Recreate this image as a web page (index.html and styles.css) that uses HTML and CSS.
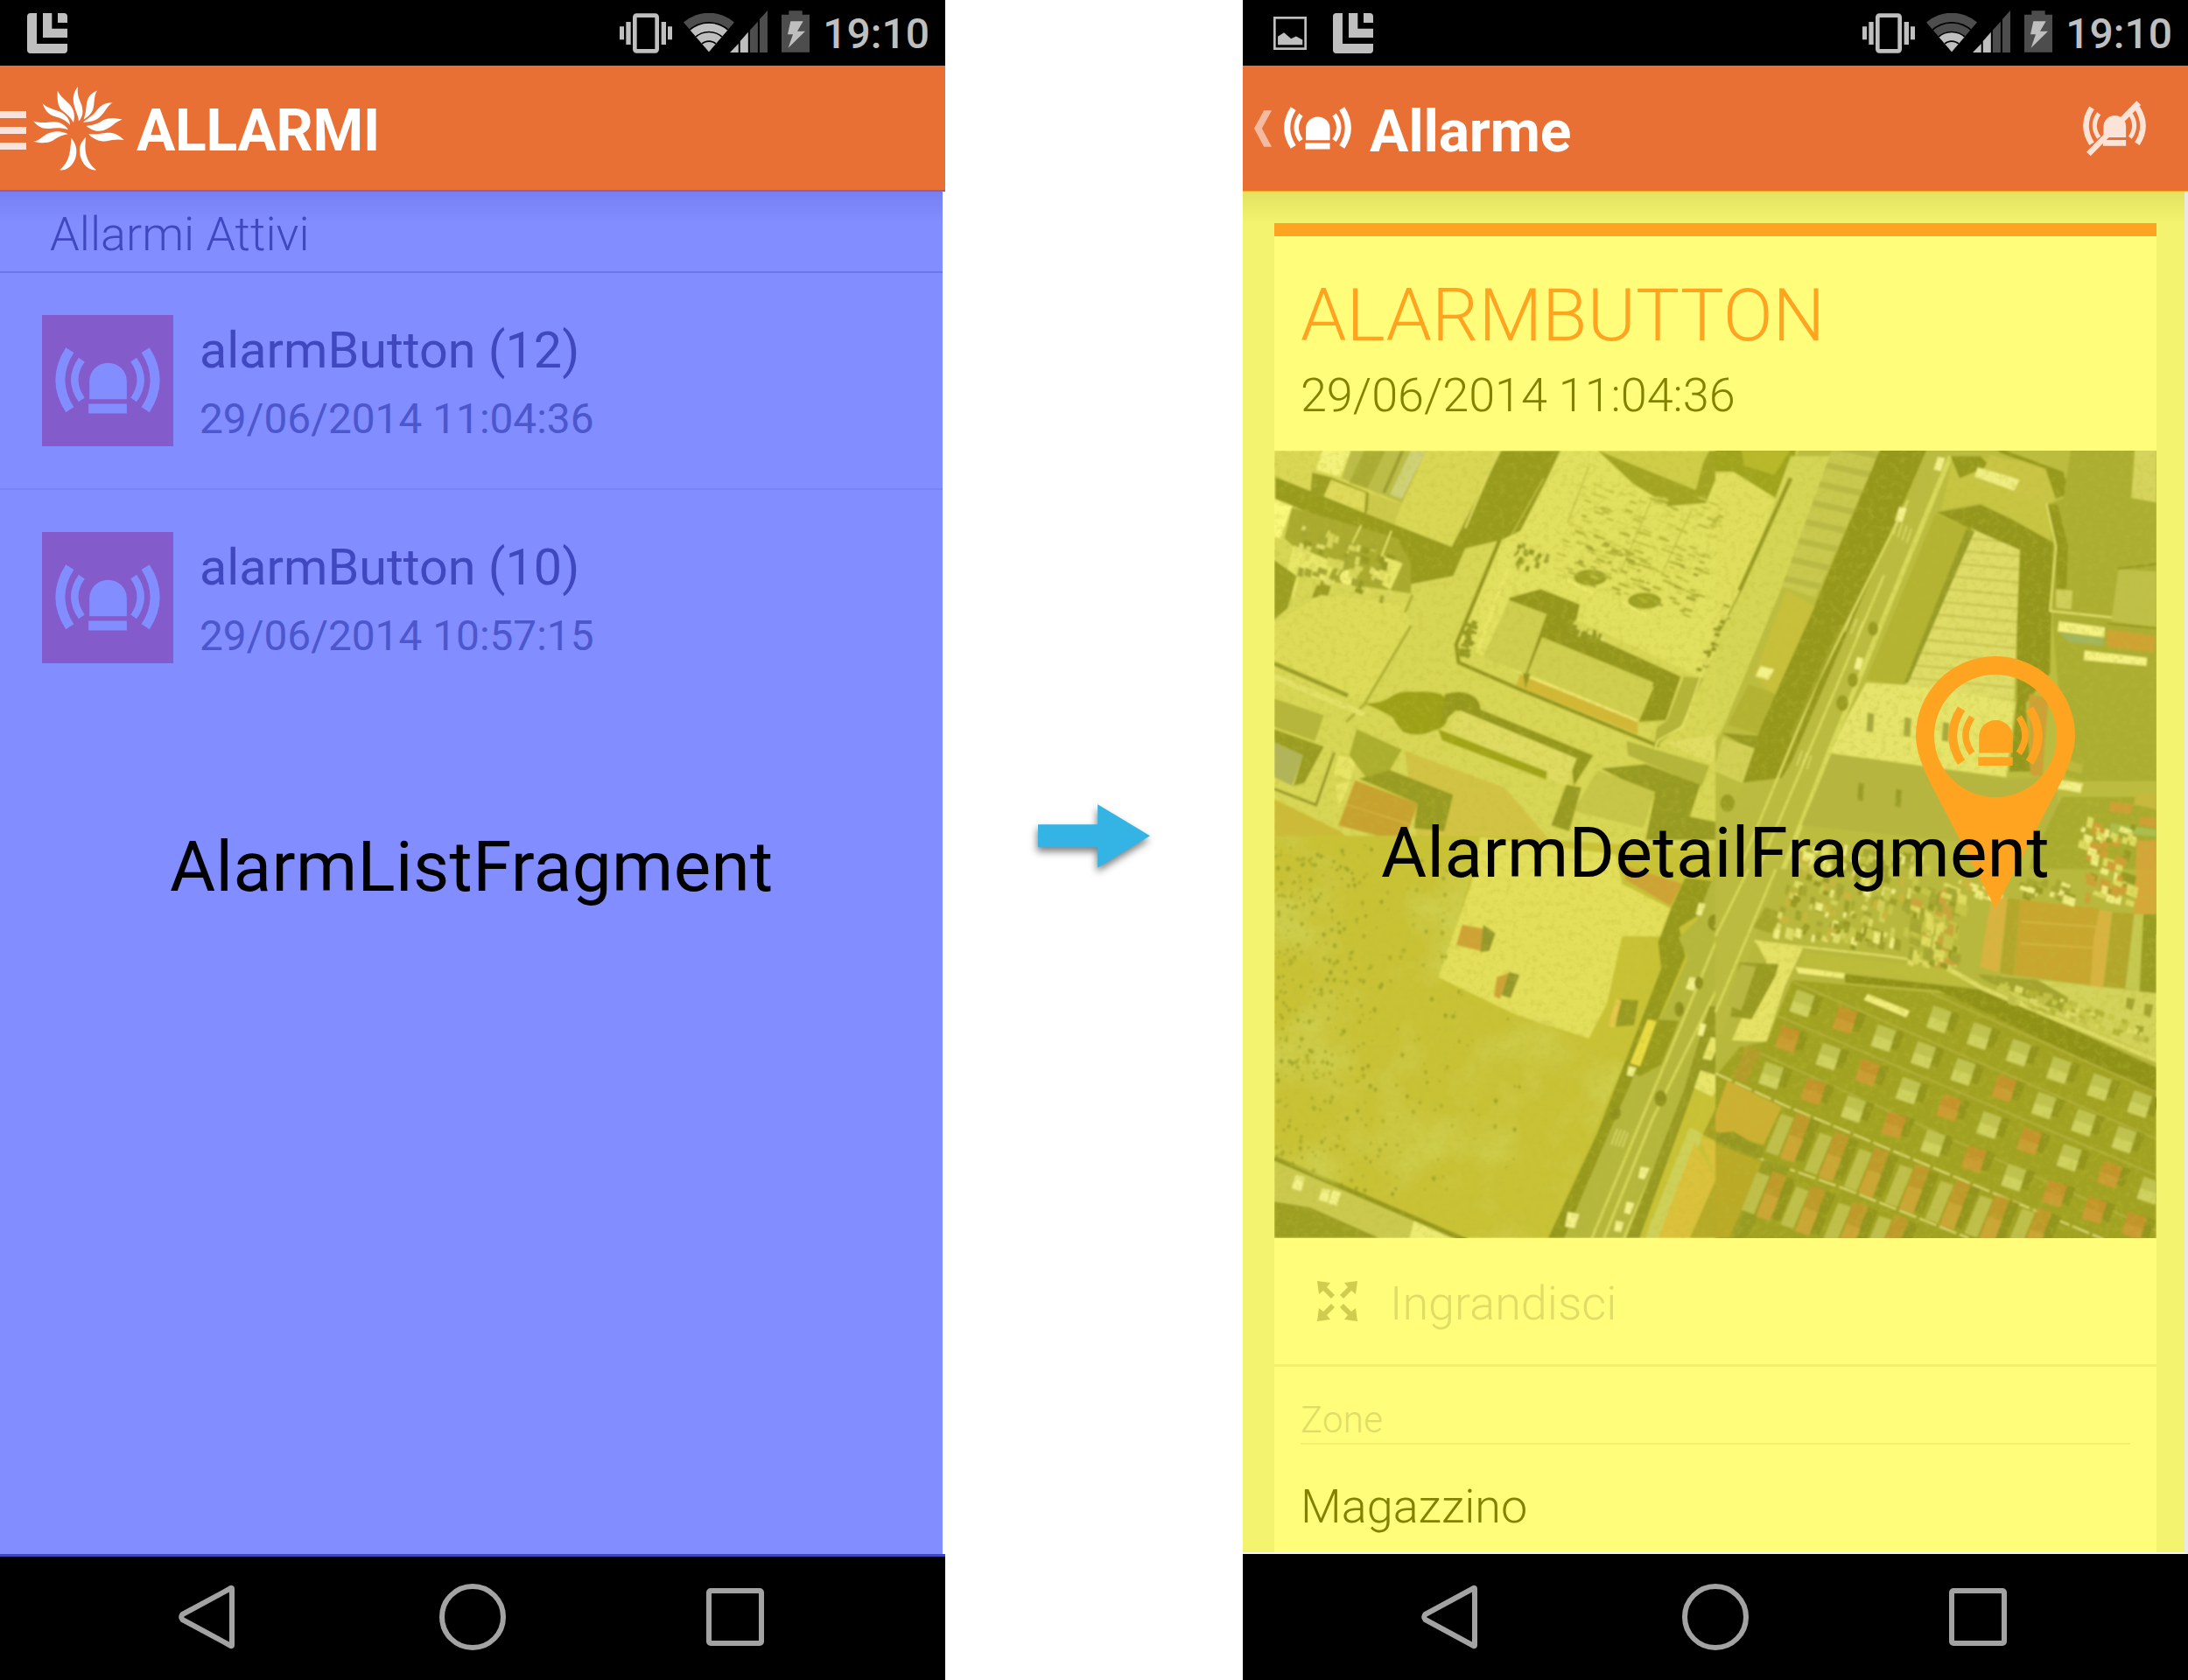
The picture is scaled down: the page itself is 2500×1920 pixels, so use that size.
FILE: index.html
```html
<!DOCTYPE html>
<html lang="it">
<head>
<meta charset="utf-8">
<title>Allarmi</title>
<link rel="stylesheet" href="styles.css">
</head>
<body>
<svg class="defs" aria-hidden="true">
  <symbol id="alarm" viewBox="200 368 230 146">
    <g fill="none" stroke="currentColor">
      <path stroke-width="21" d="M232 374Q190 440 232 505M398 374Q440 440 398 505"/>
      <path stroke-width="16" d="M258 395Q227 439 258 483M372 395Q403 439 372 483"/>
    </g>
    <path fill="currentColor" d="M275 482v-40a41 40 0 0 1 82 0v40zM273 492h84v21h-84z"/>
  </symbol>
  <symbol id="notif" viewBox="93 45 138 138">
    <path fill="#bfbfbf" d="M105 45h21v105h105v21q0 12-12 12H105q-12 0-12-12V57q0-12 12-12zM147 45h31v53h53v31h-84zM198 45h21q12 0 12 12v21h-33z"/>
  </symbol>
  <symbol id="vibrate" viewBox="84 42 180 138">
    <rect x="136" y="50" width="76" height="122" rx="6" fill="none" stroke="#bfbfbf" stroke-width="14"/>
    <path fill="#bfbfbf" d="M84 88h15v45H84zM106 72h16v78h-16zM227 72h16v78h-16zM249 88h15v45h-15z"/>
  </symbol>
  <symbol id="signal" viewBox="460 37 128 143">
    <path fill="#bfbfbf" d="M460 180h29v-30zM495 180h27v-69l-27 30z"/>
    <path fill="#4d4d4d" d="M528 180h27V75l-27 29zM561 180h27V37l-27 30z"/>
  </symbol>
  <symbol id="battery" viewBox="636 37 96 143">
    <path fill="#4d4d4d" d="M636 51h25V37h46v14h25v129h-96z"/>
    <path fill="#bfbfbf" d="M667 73h43l-20 35h27l-58 57 16-47h-18z"/>
  </symbol>
  <clipPath id="wedge"><path d="M389 174L302 73A133 133 0 0 1 476 73z"/></clipPath>
  <symbol id="navback" viewBox="0 0 64 74"><path d="M61 5v64q0 2-2 .5L4.500 40q-2.500-3 0-6L59 4.500q2-1.500 2 .5z" fill="none" stroke="#a3a3a3" stroke-width="6" stroke-linejoin="round"/></symbol>
  <symbol id="navhome" viewBox="0 0 76 76"><circle cx="38" cy="38" r="35" fill="none" stroke="#a3a3a3" stroke-width="6"/></symbol>
  <symbol id="navrecent" viewBox="0 0 66 66"><rect x="3" y="3" width="60" height="60" rx="2" fill="none" stroke="#a3a3a3" stroke-width="6"/></symbol>
</svg>

<section class="phone">
  <div class="status">
    <svg class="notif notif-first"><use href="#notif"/></svg>
    <div class="sys">
      <svg class="i-vib"><use href="#vibrate"/></svg>
      <svg class="i-wifi" viewBox="302 42 174 134"><g clip-path="url(#wedge)"><circle cx="389" cy="174" r="140" fill="#4d4d4d"/><circle cx="389" cy="174" r="99" fill="#bfbfbf"/><g fill="none" stroke="#000" stroke-width="5"><circle cx="389" cy="174" r="100"/><circle cx="389" cy="174" r="68"/><circle cx="389" cy="174" r="36"/></g></g></svg>
      <svg class="i-sig"><use href="#signal"/></svg>
      <svg class="i-bat"><use href="#battery"/></svg>
      <span class="clock">19:10</span>
    </div>
  </div>
  <header class="bar bar-list">
    <div class="burger"><i></i><i></i><i></i></div>
    <svg class="tree" viewBox="115 300 310 286" fill="#fff">
      <path d="M267 300C248 325 249 345 256 370 262 390 268 400 270 418 285 400 286 385 279 360 270 340 264 325 267 300z"/>
      <path d="M333 313C305 325 299 340 296 365 294 385 292 395 287 412 305 400 318 390 321 365 324 345 322 330 333 313z"/>
      <path d="M385 354C350 355 340 370 328 385 315 402 300 408 284 422 310 420 330 418 345 400 362 382 365 368 385 354z"/>
      <path d="M418 412C390 405 370 405 352 415 335 428 315 432 296 434 310 446 330 455 352 450 380 442 390 422 418 412z"/>
      <path d="M424 482C405 462 385 455 360 458 340 462 320 462 303 462 315 475 335 488 360 486 385 482 400 478 424 482z"/>
      <path d="M198 314C196 345 198 365 212 380 228 393 243 405 252 423 258 400 255 380 240 362 225 345 208 335 198 314z"/>
      <path d="M147 358C155 380 165 395 190 402 210 407 228 415 240 431 240 410 225 395 205 385 180 375 162 372 147 358z"/>
      <path d="M115 418C130 435 145 445 170 443 195 440 215 440 234 447 225 430 205 420 185 420 160 422 140 425 115 418z"/>
      <path d="M115 487C140 485 150 460 180 455 200 450 220 455 233 462 210 465 195 475 180 485 160 495 135 492 115 487z"/>
      <path d="M245 474C240 510 245 550 205 584 235 588 262 560 262 520 262 500 255 490 245 474z"/>
      <path d="M294 472C290 510 288 550 330 584 300 588 272 555 273 515 274 495 282 485 294 472z"/>
    </svg>
    <h1 class="title title-list">ALLARMI</h1>
  </header>
  <main class="list">
    <h2 class="list-head">Allarmi Attivi</h2>
    <article class="row">
      <div class="tile"><svg><use href="#alarm"/></svg></div>
      <div class="row-text"><p class="name">alarmButton (12)</p><p class="when">29/06/2014 11:04:36</p></div>
    </article>
    <article class="row row-last">
      <div class="tile"><svg><use href="#alarm"/></svg></div>
      <div class="row-text"><p class="name">alarmButton (10)</p><p class="when">29/06/2014 10:57:15</p></div>
    </article>
    <div class="caption caption-list">AlarmListFragment</div>
  </main>
  <nav class="nav nav-list"><svg class="n-back"><use href="#navback"/></svg><svg class="n-home"><use href="#navhome"/></svg><svg class="n-rec"><use href="#navrecent"/></svg></nav>
</section>

<div class="between">
  <svg class="arrow" viewBox="108 118 383 217"><path fill="#34b4e5" d="M108 187h204v-69l179 108-179 109v-70H108z"/></svg>
</div>

<section class="phone">
  <div class="status">
    <svg class="i-pic" viewBox="165 57 113 113"><rect x="169" y="61" width="105" height="105" fill="none" stroke="#bfbfbf" stroke-width="8"/><path fill="#bfbfbf" d="M180 153v-28l21-14 24 21 17-8 22 12v17z"/></svg>
    <svg class="notif notif-second"><use href="#notif"/></svg>
    <div class="sys">
      <svg class="i-vib"><use href="#vibrate"/></svg>
      <svg class="i-wifi" viewBox="302 42 174 134"><g clip-path="url(#wedge)"><circle cx="389" cy="174" r="140" fill="#4d4d4d"/><circle cx="389" cy="174" r="68" fill="#bfbfbf"/><g fill="none" stroke="#000" stroke-width="5"><circle cx="389" cy="174" r="100"/><circle cx="389" cy="174" r="68"/><circle cx="389" cy="174" r="36"/></g></g></svg>
      <svg class="i-sig"><use href="#signal"/></svg>
      <svg class="i-bat"><use href="#battery"/></svg>
      <span class="clock">19:10</span>
    </div>
  </div>
  <header class="bar bar-detail">
    <svg class="up" viewBox="99 378 61 126"><path fill="#f4bba0" d="M160 378h-27L99 440l34 64h27l-34-64z"/></svg>
    <svg class="bar-alarm"><use href="#alarm"/></svg>
    <h1 class="title title-detail">Allarme</h1>
    <svg class="mute" viewBox="900 345 216 190"><use href="#alarm" x="900" y="363" width="216" height="137"/><path d="M919 527L1091 352" stroke="currentColor" stroke-width="20"/></svg>
  </header>
  <main class="detail">
    <div class="card">
      <div class="card-head"><h2 class="kind">ALARMBUTTON</h2><p class="stamp">29/06/2014 11:04:36</p></div>
      <div class="map">
        <svg class="aerial" viewBox="0 0 1008 900" preserveAspectRatio="none">
          <defs>
            <filter id="grain" x="0" y="0" width="100%" height="100%"><feTurbulence type="fractalNoise" baseFrequency=".14" numOctaves="3" seed="4"/><feColorMatrix values="0 0 0 0 .5  0 0 0 0 .5  0 0 0 0 .04  0 1.800 0 0 -.8"/></filter>
            <filter id="blotch" x="0" y="0" width="100%" height="100%"><feTurbulence type="fractalNoise" baseFrequency=".012" numOctaves="4" seed="9"/><feColorMatrix values="0 0 0 0 .66  0 0 0 0 .69  0 0 0 0 .12  0 3 0 0 -1.350"/></filter>
            <filter id="soft" x="0" y="0" width="100%" height="100%"><feGaussianBlur stdDeviation=".8"/></filter>
            <pattern id="ribs" width="14" height="42" patternUnits="userSpaceOnUse" patternTransform="rotate(5)"><rect width="14" height="42" fill="#dfdd68"/><rect y="36" width="14" height="5" fill="#c2bf4a"/></pattern>
            <pattern id="glass" width="9" height="64" patternUnits="userSpaceOnUse" patternTransform="rotate(12)"><rect width="9" height="64" fill="#cfce54"/><rect width="3" height="64" fill="#bdbd46"/><rect width="9" height="20" fill="#b3b440" opacity=".7"/></pattern>
            <clipPath id="field"><path d="M0 440L235 450 190 605 365 672 400 700 310 900 205 900 0 808z"/></clipPath>
          </defs>
          <g filter="url(#soft)">
          <rect width="1008" height="900" fill="#d8d654"/>
          <!-- north-west block -->
          <g transform="translate(-16 -15) scale(.3444 .3333)">
            <path fill="#dad755" d="M46 45H790L630 405 46 150z"/>
            <path fill="#bcbd48" d="M300 45H550L470 225 270 140z"/><path fill="#cfd176" d="M500 45h50l-80 165-40-15z"/><path stroke="#9c9e2e" stroke-width="12" d="M472 45L410 190"/><path fill="#a9ab34" d="M345 45h70l-60 130-60-20z"/>
            <path fill="#f4f27a" d="M205 45h95l-35 90-80-25z"/>
            <path fill="#9c9e24" d="M172 120l60 15 120 50 25 15-25 60-185-75z"/><path fill="#e0da5a" d="M235 145l115 45-5 68-135-55z"/>
            <path fill="#cdca4c" d="M360 190l110 38-30 80-85-35z"/>
            <path fill="#999b1e" d="M800 45h195L865 335l-185 45-40 95-150 30-30-105-120-65-290-125v-75l300 125 285 115z"/>
            <path stroke="#dfdc5e" stroke-width="7" fill="none" d="M790 45L680 310"/><path stroke="#c3c244" stroke-width="4" d="M940 140L830 340"/>
            <path fill="#fbf97a" d="M46 212l60 23-40 110-20-5z"/>
            <path fill="#a9aa2f" d="M105 240l350 105 45 90v100l-260-40-160-150z"/>
            <path fill="#e9e768" d="M110 370l140 60-30 65-90-30-20 90-20-100zM410 405l62 27-40 90-65-40z"/>
            <circle cx="290" cy="480" r="26" fill="#f4f27a"/>
            <path fill="#9c9e22" d="M46 420l75 55-30 110-45 40zM195 485l40 20-10 40-55 5z"/>
            <path stroke="#f0ee70" stroke-width="5" fill="none" d="M240 500l95-200M375 480l60-160M200 380l30-60"/>
            <path fill="#dedb59" d="M200 540l280 30 20 80-155 265-300-140V640z"/>
            <path stroke="#aeb032" stroke-width="9" fill="none" d="M500 645L345 915l-60 60M505 540l-25 60"/>
            <path stroke="#9b9d26" stroke-width="15" fill="none" d="M46 775l245 110"/>
            <path stroke="#e4e266" stroke-width="20" fill="none" d="M46 820l300 130"/>
            <path fill="#e2e05e" d="M1000 45h568v520l-110 255-610-290-70 200-130-20 155-360 60-30z"/>
            <path stroke="#c6c548" stroke-width="5" fill="none" d="M1090 100l-70 190M1300 210l-100 240M1430 250l-90 200"/>
            <path fill="#cfcd49" d="M1120 45l330 140 45-140z"/><path fill="#a3a524" d="M1120 45l325 135 25-95 20-40h78v85l-60 20-30 75-120 10-120-75z"/><path fill="#d0ce4a" d="M1150 45l292 118 38-118z"/>
            <path stroke="#95971c" stroke-width="13" fill="none" d="M795 350L650 710l8 62 205 92 460 194"/>
            <path stroke="#e9e668" stroke-width="12" fill="none" d="M820 450L720 735l160 75"/>
            <path fill="#d3b836" d="M862 812l390 160v45L850 850z"/><path stroke="#f3ea74" stroke-width="8" d="M870 812l385 160"/>
            <path fill="#95971c" d="M825 550l105-30 130 52-10 50-20 25 365 173-50 150-90 5 50-120-370-160-55 165z"/>
            <path fill="#cfce50" d="M825 557l125 48-70 205-142-55zM935 685l370 155-50 130-368-162z"/>
            <ellipse cx="1095" cy="480" rx="55" ry="28" fill="#9fa124"/><ellipse cx="1275" cy="560" rx="55" ry="28" fill="#9fa124"/>
            <path stroke="#f1ee70" stroke-width="6" d="M1020 490l85 45M1195 560l85 50"/>
            <path fill="#b4b438" d="M1405 820l65 5-75 165-90 75 10-70 35-25z"/><path stroke="#e9e76a" stroke-width="5" fill="none" d="M1568 600l-110 230-55 160-85 50-15 70"/>
            <path fill="#9ea018" d="M345 912q60 0 90-25 30-20 75-15 50-5 90 8 25 20 20 60 10 55-45 65-50 25-100 5-25-25-35-50-50-30-95-48z"/>
            <path fill="#95981f" d="M612 880q60-20 100 10 20 20 18 42l375 158-65 105-10-95-380-165-50 45z"/>
            <path fill="#dedb60" d="M662 935l388 165-35 95-395-195z"/>
            <path fill="#a2a516" d="M590 1000l362 145-4 28-345-135z"/>
            <path fill="#b5b63b" d="M46 895l165 57-30 90-135-50z"/><path fill="#9a9c20" d="M46 1000l165 60-65 125-35 10 30-105-95-45z"/><path fill="#b1b45a" d="M46 1045l95 45-35 105-60-30z"/>
            <path stroke="#98992a" stroke-width="9" fill="none" d="M245 1080l-60 180-139-55"/>
            <path fill="#e8e566" d="M260 1090l60 15-20 70-55-20zM250 1190l50-10-40 90z"/>
            <path fill="#acae2e" d="M320 1000l150 70-40 70-80 25-55-75z"/>
            <path fill="#d3c344" d="M480 1075l330 125 150 180H520z"/><path fill="#cdbb38" d="M46 1240l220 110 40 40H46z"/>
            <path fill="#999c20" d="M430 1140l210 85-30 125-100-10 12-85-195-85z"/>
            <path fill="#c8a22e" d="M315 1175l207 80-45 135-218-60z"/><path stroke="#d5b23c" stroke-width="5" d="M285 1258l215 70"/>
            <path fill="#b4b53a" d="M1215 1040l275 85-25 70-245-105z"/><path fill="#e0dd62" d="M1345 1045l190-30-40 105z"/>
            <path fill="#989b20" d="M1130 1135l150-15 180 70-35 110 143 30v50h-290l30-150z"/><path fill="#c8c64a" d="M1120 1140l190 75-40 125-232-60z"/><path fill="#989b20" d="M1015 1190l50 10-40 150-60-20z"/>
          </g>
          <!-- south-west field and road -->
          <g transform="translate(-16 445) scale(.3444 .3333)">
            <path fill="#c9c236" d="M46-15H730L1568 40V1365H46z"/>
            <path fill="#e3df5a" d="M700 150L730-10l450 60 20 100 170 90-40 90-130 0-50 230-60 120-240-80-260-130z"/>
            <path fill="#cfa236" d="M1215 90l185 60-40 75-150-90zM670 290l75 15-15 75-80-20zM785 470l40-15-30 90-20-10z"/><path fill="#96992a" d="M740 290l40 30-20 60-30 5zM825 452l35 10-30 80-30-10z"/>
            <path fill="#97991f" d="M1410 130l90 10 20 40-70 80-60 40 20 100-400 965h-55L1120 1000l210-560-10-90 40-110z"/>
            <path fill="#b5b73c" d="M1500 130l68-60v420l-330 875h-230l190-460 220-500-30-70 60-60z"/>
            <g fill="none" stroke="#d6d658" stroke-width="9"><path d="M1568 210L1100 1365M1568 400L1300 960 1140 1365"/><path stroke-width="15" d="M1568 520L1210 1365"/></g>
            <path fill="#989a22" d="M1490 570h78v130l-50 120-60-20-200 565h-45l190-500z"/>
            <path fill="#cfd058" d="M1470 1010l-145 355h-50l150-380z"/>
            <path fill="#e8e56a" d="M1460 790l80 25-40 65-60-30zM1495 675l32 10-30 70-30-5z"/>
            <path fill="#a59f22" d="M1568 800l-100 210 100 50z"/><path fill="#dcc13a" d="M1440 1040l75 120-90 205h-105zM1460 1020l108 40-55 100z"/><path fill="#b6aa27" d="M1513 1160l55-90v295h-143z"/>
            <path fill="#999b1c" d="M1315 615l75 5-60 150-70 40-20-10z"/><path fill="#eadb42" d="M1285 615l30 6-55 155-33-10z"/><path fill="#999b22" d="M1190 545l65 5-15 85-60 5z"/><path fill="#e6c94a" d="M1180 545l18 5-25 95-18-8z"/>
            <path fill="#cbca50" d="M46 1100l600 265H46z"/><path fill="#9d9f24" d="M46 1240l120 20 230 105H46z"/><path fill="#ecea70" d="M510 1305l120 60H495z"/><path stroke="#97981c" stroke-width="17" d="M46 1090l640 285"/>
            <g fill="#f3f188"><path d="M118 1150l30 5-12 48-32-8zM205 1195l28 5-10 42-30-8zM240 1200l28 8-14 46-28-8zM1425 470l28 5-16 42-26-8zM1455 215l22 5-14 40-18-5zM1262 1120l30 5-18 38-20-5zM1020 1275l38 8-15 48-32-5zM1215 1240l26 6-14 38-20-5zM1180 1305l26 6-10 34-22-5zM1460 628l20 5-12 40-18-4zM1530 640l22 5-8 28-20-4zM1222 775l26 6-12 30-20-5z"/></g>
            <g fill="#8f911f"><ellipse cx="1505" cy="283" rx="20" ry="28"/><ellipse cx="1328" cy="886" rx="20" ry="28"/><ellipse cx="1390" cy="580" rx="16" ry="26"/><ellipse cx="1178" cy="935" rx="18" ry="24"/><ellipse cx="1455" cy="490" rx="14" ry="22"/></g>
            <path stroke="#dfe070" stroke-width="4" d="M1165 1045l20-55m-8 58l20-55m-8 58l20-55m-8 58l18-50"/>
          </g>
          <g clip-path="url(#field)"><rect y="430" width="420" height="470" filter="url(#blotch)" opacity=".5"/><g id="bushes" opacity=".7"></g></g>
          <!-- north-east warehouses -->
          <g transform="translate(504 -15) scale(.3444 .3571)">
            <path fill="#bcbd40" d="M0 30h1480v1560H0z"/>
            <path fill="#e0de5c" d="M0 30h280L90 470 0 660z"/><path fill="#a0a31c" d="M0 30h270l-20 110-40 60-150-90-60 0z"/><path fill="#b8b82a" d="M85 30h170l-60 90-100-30z"/>
            <path fill="#d6d656" d="M250 60h130L220 480 20 940 0 970V640l90-160z"/><path stroke="#999b22" stroke-width="14" d="M250 130L80 490"/><path stroke="#9fa12a" stroke-width="5" fill="none" d="M90 480L0 650"/>
            <path fill="url(#glass)" d="M390 30h165L330 512l-110-35z"/>
            <path fill="#96981c" d="M550 30h155L300 965l-80 125-130 15 60-180 180-390z"/>
            <path fill="#babb40" d="M705 30h95L505 700 150 1568H0v-350l100-110 130-20z"/>
            <g fill="none" stroke="#d9d95c" stroke-width="8"><path d="M640 200L340 780 0 1568"/><path d="M560 440L60 1568"/><path stroke-width="16" d="M780 60L600 480 380 1000 150 1568"/></g>
            <path stroke="#a0a228" stroke-width="12" d="M420 600L250 960"/>
            <path fill="#c8c03a" d="M235 488l95 52-135 290-65-70z"/><path fill="#b4b232" d="M110 790l90 30-60 130-100-30z"/><path fill="#979a20" d="M20 945l120 10-10 50z"/><path fill="#d2d156" d="M25 960l105 35-40 112-95-40z"/>
            <path fill="#c7c542" d="M790 60l300 20 40 140-20 110-230-120-130 20z"/><path fill="#96991e" d="M780 60l100 0 30 30-100 40zM930 30l170 60 55 20 20 70-45 15-35-95-150-50z"/><path fill="#cac545" d="M910 55l180 45 40 100-40 15-130-50-70-60z"/><path fill="#f0ee82" d="M870 95l140 40-20 35-130-45z"/>
            <path fill="#acae31" d="M1180 30h283v1070h-300L1120 600V330l-20-115 55-20z"/><path fill="#96981e" d="M1100 215l35 0 35 130-5 140-35 10v-160z"/>
            <path fill="#94971a" d="M735 240l145-25 100 45 140 75-10 420-110 130 0-520z"/>
            <path fill="#b4b332" d="M730 245l105 43-205 505-130-18z"/><path fill="url(#ribs)" d="M850 292l160 68-20 492-360-62z"/><path fill="#989b28" d="M835 288l25 12-60 130-160 355-15 3z"/>
            <path stroke="#e3e16a" stroke-width="6" fill="none" d="M1098 210l32 140-20 205 340 35"/>
            <path fill="#bfc047" d="M1338 420l125 10v178l-150-20z"/><path stroke="#93961e" stroke-width="6" d="M1335 420l128-15M1300 595l163 15"/><path fill="#d6d45c" d="M1392 30h71v178l-83-15z"/><path fill="#d0cf5c" d="M1130 485l55 5-5 60-50-5z"/>
            <path fill="#f5f282" d="M1140 588l152 20-2 32-155-20zM1225 682l207 23-2 26-208-18z"/><path fill="#a0b65e" d="M1140 625l150 15-4 26-110-10z"/><path fill="#cfa232" d="M1300 614l160 22-5 52-157-18z"/>
            <path fill="#e6e46a" d="M500 785l145 8 350 52-30 242-585-77 60-120z"/><path fill="#a9aa3c" d="M505 880l22 4-4 60-22-4zM628 895l22 4-4 60-22-4zM755 910l22 4-4 60-22-4z"/>
            <path fill="#b5b540" d="M385 1012l580 80 160-10 30 200-370 10-500-50z"/><path fill="#989b25" d="M475 1105l18 4-4 55-18-4zM600 1125l18 4-4 55-18-4z"/>
            <path fill="#93971f" d="M1000 850l30 0 15 220-70 0z"/><path fill="#cfa034" d="M1040 820l65 15-20 250-40-5z"/>
            <path fill="#bdb93c" d="M1150 1030l70 15-5 30-70-15zM1160 1085l72 20-6 36-72-22z"/><path fill="#a9ab2e" d="M1150 1150h313v418H990l60-220z"/>
            <path fill="#c8b83c" d="M1395 1140h68v50l-75-15z"/><path fill="#cf9f34" d="M1310 1165l75 10-8 30-70-8zM1410 1215h53v35l-60-12z"/><path fill="#a9bf50" d="M1312 1235l150 20v22l-152-15z"/>
            <path fill="#d4a538" d="M1398 1290h65v278h-75z"/>
            <g fill="#f3f188"><path d="M738 62l24 4-14 42-24-6zM610 222l25 5-15 44-24-6zM470 702l22 5-12 38-20-5zM150 730l45 12-20 34-42-12zM1130 1095l90 12-8 30-80-14zM850 1460l50 5-4 20-50-5z"/></g>
            <g fill="#9a9c22"><ellipse cx="523" cy="612" rx="17" ry="23"/><ellipse cx="456" cy="776" rx="17" ry="23"/><ellipse cx="421" cy="850" rx="20" ry="26"/><ellipse cx="40" cy="1170" rx="24" ry="28"/></g>
            <path stroke="#e4e270" stroke-width="4" d="M590 310l15-45m0 54l15-45m0 54l15-45m0 54l15-45M430 620l20-48m0 56l20-48m0 56l20-48M270 1050l18-48m-2 54l18-48m0 54l14-44"/>
          </g>
          <!-- south-east works and sheds -->
          <g transform="translate(504 485) scale(.3444 .3333)">
            <path fill="#b7b83d" d="M0-20h1463V700H0z"/>
            <path fill="#babb40" d="M0-20h210L130 225 20 550H0z"/><path stroke="#d9d95c" stroke-width="8" fill="none" d="M110-20L0 210M200-20L0 470"/>
            <path fill="#a4a52c" d="M165 110l60 20-40 70-60-20z"/>
            <path fill="#e6e266" d="M130 222l160 30-60 130-60 190-115-5 75-180 40-90z"/><path fill="#989a22" d="M80 300l130 5-10 40-80 150-70-10z"/><path fill="#b7b742" d="M85 305l50 10-50 150-50-20z"/>
            <path stroke="#e4e068" stroke-width="7" fill="none" d="M130 228l440 50 230 35"/>
            <path fill="#bdbc3a" d="M295 265l480 60 70 60-560-70z"/>
            <path fill="#a2a223" d="M255 360l640 60 568 260v580H0V690l80-100 90-20z"/>
            <path fill="#8f9218" d="M430 340l470 55 563 265v90L740 395l-310-25z"/><path fill="#f1ed78" d="M265 315l165 22-5 18-150-18zM505 408l140 58-12 22-140-60z"/>
            <path stroke="#dedb62" stroke-width="16" fill="none" d="M770 320l120 70 573 245"/>
            <path fill="#d3d25a" d="M950 345l513 60v220l-530-230z"/><path fill="#a3a42e" d="M870 340l200 20 100 60 0 60-280-120zM1365 420l28 5-10 40-22-10zM1425 440l28 5-10 44-22-10zM1395 515l28 5-10 40-22-10z"/>
            <path fill="#c9a62e" d="M1010 85l262 30-30 262-250-35z"/><path fill="#d9b340" d="M915 80l55-5-30 260-62-20zM1275 120l40 5-30 262-40-10 10-160z"/><path fill="#b3a62a" d="M970 80l40 5-20 260-45-10zM1318 128l70 5-25 255-75-5z"/><path fill="#c5c950" d="M1390 135h30l-15 265-45-12z"/><path fill="#999d20" d="M1420 135h43v270l-55-5z"/><path fill="#d6a838" d="M1395-20h68v155h-75z"/>
            <path stroke="#d4b640" stroke-width="6" d="M1015 160l250 18M1012 235l245 15"/>
            <g stroke="#b5b340" stroke-width="5" fill="none"><path d="M255 365l1208 540M715 405l748 340M200 480l1263 550M80 580l1383 640"/></g>
            <path stroke="#e3df72" stroke-width="6" stroke-dasharray="60 12" fill="none" d="M0 680l230 110 1060 460M140 970l300 110 400 165"/>
            <path fill="#cdb032" d="M40 705l180 90-60 130-160-45V820z"/><path fill="#969820" d="M0 885l60-5 100 60-10 35-150-65z"/><path fill="#baaa26" d="M0 920l155 65-110 260H0z"/><path fill="#989b20" d="M160 975l90 30-150 240H60z"/>
            <path fill="#b49c2a" d="M100 590l50 15-50 110-40-20z"/>
            <g id="skylights"></g>
          </g>
          <g id="yard"></g>
          </g>
          <rect width="1008" height="900" filter="url(#grain)" opacity=".4"/>
        </svg>
        <svg class="pin" viewBox="0 0 182 288"><path fill="#ffa421" fill-rule="evenodd" d="M91 288L22 155Q0 115 0 91A91 91 0 0 1 182 91Q182 115 160 155zM91 21a70 70 0 1 0 0 140a70 70 0 1 0 0-140z"/><use href="#alarm" x="37" y="57" width="108" height="68.500" color="#ffa421"/></svg>
      </div>
      <div class="enlarge">
        <svg viewBox="0 0 46 46" fill="#cfcc50"><path d="M0 0l15 2-4 5 9 9-4 4-9-9-5 4z"/><path transform="matrix(-1 0 0 1 46 0)" d="M0 0l15 2-4 5 9 9-4 4-9-9-5 4z"/><path transform="matrix(1 0 0 -1 0 46)" d="M0 0l15 2-4 5 9 9-4 4-9-9-5 4z"/><path transform="matrix(-1 0 0 -1 46 46)" d="M0 0l15 2-4 5 9 9-4 4-9-9-5 4z"/></svg>
        <span class="enlarge-label">Ingrandisci</span>
      </div>
      <div class="zone"><h3 class="zone-title">Zone</h3><p class="zone-name">Magazzino</p></div>
    </div>
    <div class="caption caption-detail">AlarmDetailFragment</div>
  </main>
  <nav class="nav"><svg class="n-back"><use href="#navback"/></svg><svg class="n-home"><use href="#navhome"/></svg><svg class="n-rec"><use href="#navrecent"/></svg></nav>
</section>
<script src="map.js"></script>
</body>
</html>
```
FILE: styles.css
```css
* { box-sizing: border-box; margin: 0; padding: 0; }
body { width: 2500px; height: 1920px; display: flex; background: #fff; font-family: Roboto, "Liberation Sans", sans-serif; overflow: hidden; }
svg { display: block; flex: none; }
h1, h2, h3, p { font-weight: inherit; white-space: nowrap; }
.defs { position: absolute; width: 0; height: 0; }
.phone { width: 1080px; height: 1920px; display: flex; flex-direction: column; flex: none; }

.status { height: 75px; flex: none; background: #000; display: flex; align-items: center; }
.notif { width: 46px; height: 46px; }
.notif-first { margin-left: 31px; }
.notif-second { margin-left: 30px; }
.i-pic { width: 38px; height: 38px; margin-left: 35px; }
.sys { margin-left: auto; display: flex; align-items: center; padding-right: 18px; }
.i-vib { width: 60px; height: 46px; }
.i-wifi { width: 58px; height: 45px; margin-left: 13px; }
.i-sig { width: 43px; height: 48px; margin-left: -5px; margin-bottom: 3px; }
.i-bat { width: 32px; height: 48px; margin-left: 16px; margin-bottom: 3px; }
.clock { color: #bfbfbf; font-size: 48px; font-weight: 500; line-height: 75px; padding-top: 2px; margin-left: 15px; }

.bar { height: 144px; flex: none; background: #e97035; color: #fff; display: flex; align-items: center; }
.bar-list { border-bottom: 2px solid #7964c4; }
.bar-detail { border-bottom: 1px solid #f5ab1f; }
.burger { width: 30px; display: flex; flex-direction: column; gap: 10px; padding-top: 5px; }
.burger i { height: 8px; background: #fae3da; }
.tree { width: 104px; height: 96px; margin-left: 8px; margin-top: 2px; }
.title { font-size: 66px; font-weight: 700; line-height: 100px; padding-top: 8px; }
.title-list { margin-left: 14px; letter-spacing: -.3px; }
.title-detail { margin-left: 21px; letter-spacing: -.2px; }
.up { width: 20px; height: 42px; margin-left: 13px; }
.bar-alarm { width: 77px; height: 49px; margin-left: 14px; }
.mute { width: 72px; height: 64px; margin-left: auto; margin-right: 48px; color: #fbe3d8; }

.list { position: relative; flex: 1; width: 1077px; background: linear-gradient(#7680f2, #828dff 36px); color: #4048bf; }
.list-head { height: 93px; border-bottom: 2px solid #6b76ea; font-size: 54px; font-weight: 300; line-height: 97px; padding-left: 57px; }
.row { height: 248px; display: flex; padding: 48px 0 0 48px; gap: 30px; border-bottom: 2px solid #7883f4; }
.row-last { border-bottom: 0; }
.tile { width: 150px; height: 150px; background: #835bcb; color: #828dff; display: flex; align-items: center; justify-content: center; }
.tile svg { width: 120px; height: 76px; }
.name { font-size: 57.5px; line-height: 82px; }
.when { font-size: 47.8px; line-height: 74px; color: #4c56cd; }

.caption { position: absolute; color: #000; font-size: 80px; line-height: 100px; letter-spacing: .42px; white-space: nowrap; }
.caption-list { left: 194px; top: 722px; }
.caption-detail { left: 158px; top: 706px; }

.nav { height: 144px; flex: none; background: #000; display: flex; align-items: center; padding-left: 204px; }
.nav-list { border-top: 3px solid #4048bf; padding-bottom: 3px; }
.n-back { width: 64px; height: 74px; }
.n-home { width: 76px; height: 76px; margin-left: 234px; }
.n-rec { width: 66px; height: 66px; margin-left: 229px; }

.between { width: 340px; flex: none; display: flex; align-items: center; justify-content: center; padding-bottom: 9px; }
.arrow { width: 128px; height: 73px; overflow: visible; filter: drop-shadow(-1px 5px 4px rgba(0, 0, 0, .5)); }

.detail { position: relative; flex: 1; padding: 36px 32px 0 36px; background: linear-gradient(#e3e260, #f3f370 36px); border-right: 4px solid #e8e8e8; border-bottom: 2px solid #f4f4f4; }
.card { height: 1519px; background: #fffd7a; border-top: 15px solid #ffa421; }
.card-head { height: 245px; padding: 41px 30px 0; }
.kind { color: #ffa421; font-size: 84px; font-weight: 300; line-height: 100px; }
.stamp { color: #828200; font-size: 54px; font-weight: 300; line-height: 81px; letter-spacing: -.08px; }
.map { position: relative; height: 900px; }
.aerial { width: 1008px; height: 900px; overflow: hidden; }
.pin { position: absolute; left: 733px; top: 235px; width: 182px; height: 288px; }
.enlarge { height: 147px; border-bottom: 3px solid #f2f06e; display: flex; align-items: center; padding-left: 49px; gap: 37px; }
.enlarge svg { width: 46px; height: 46px; }
.enlarge-label { font-size: 54px; font-weight: 300; line-height: 100px; padding-top: 5px; color: #e0dd66; }
.zone { padding: 36px 30px 0; }
.zone-title { font-size: 42px; font-weight: 300; line-height: 50px; height: 53px; border-bottom: 2px solid #f2f06e; color: #e0dd66; letter-spacing: .3px; }
.zone-name { font-size: 54px; font-weight: 300; line-height: 100px; padding-top: 21px; color: #828200; }
```
FILE: map.js
```js
var NS = 'http://www.w3.org/2000/svg';
var seed = 11;
function rnd() { seed = (seed * 16807) % 2147483647; return seed / 2147483647; }
function add(parent, d, fill) {
  var p = document.createElementNS(NS, 'path');
  p.setAttribute('d', d); p.setAttribute('fill', fill);
  parent.appendChild(p);
}
function quad(cx, cy, w, h, k) {
  return 'M' + (cx - w / 2 + k) + ' ' + (cy - h / 2 - k / 3) + 'l' + w + ' ' + w * 0.35 + 'l' + (-2 * k) + ' ' + h + 'l' + (-w) + ' ' + (-w * 0.35) + 'z';
}
// Roof lights of the sheds: pale and terracotta
var roof = document.getElementById('skylights');
var pale = [[288,443],[558,562],[742,498],[876,555],[1006,612],[1140,672],[1274,730],[1408,788],[375,625],[690,620],[822,678],[1090,793],[1222,852],[1356,910],[185,690],[640,742],[908,860],[1174,972],[1440,1085],[458,805],[722,922],[990,1040]];
var clay = [[430,500],[240,565],[505,680],[958,735],[325,745],[775,800],[1042,915],[592,860],[1308,1030],[858,977],[1125,1095],[1257,1152],[1390,1205]];
pale.concat(clay).forEach(function (p, i) {
  add(roof, quad(p[0] + 34, p[1] - 4, 50, 62, 12), '#93951c');
  add(roof, quad(p[0], p[1] - 10, 60, 72, 12), i < pale.length ? '#bfc250' : '#c4942c');
  add(roof, quad(p[0] - 6, p[1] + 8, 60, 36, 6), i < pale.length ? '#cfd25e' : '#cb9c30');
});
[[265,910],[393,975],[525,1030],[660,1085],[795,1140],[925,1190],[1065,1235],[185,1110],[315,1160],[455,1215],[590,1260]].forEach(function (p) {
  add(roof, quad(p[0] - 52, p[1] - 18, 42, 130, 26), '#bfbf4c');
  add(roof, quad(p[0] + 40, p[1] + 5, 32, 140, 28), '#93951c');
  add(roof, quad(p[0], p[1] - 10, 46, 150, 28), '#bf9a2c');
  add(roof, quad(p[0] - 12, p[1] + 25, 46, 80, 15), '#cba636');
});
// Scrub on the field
var bushes = document.getElementById('bushes');
for (var i = 0; i < 420; i++) {
  var x = rnd() * rnd() * 330, y = 450 + rnd() * 400, r = 1 + rnd() * 2;
  add(bushes, 'M' + x + ' ' + y + 'l' + r + ' ' + (-r) + 'l' + r + ' ' + r + 'l' + (-r) + ' ' + r * 1.500 + 'z', rnd() > .5 ? '#939a22' : '#a5a624');
}
// Vehicles and crates in the yards
var yard = document.getElementById('yard');
function scatter(n, poly, colours, w, h) {
  for (var k = 0; k < n; k++) {
    var u = rnd(), v = rnd();
    var px = poly[0] + u * poly[2] - v * poly[4], py = poly[1] + v * poly[3] + u * poly[5];
    add(yard, quad(px, py, w * (.5 + rnd()), h * (.5 + rnd()), 1), colours[Math.floor(rnd() * colours.length)]);
  }
}
scatter(230, [600, 450, 150, 105, 30, 14], ['#979a22', '#9fa12a', '#e0de68', '#f0ee80', '#a5a730', '#c9b63c', '#d2d058', '#c8c84c'], 6, 9);
scatter(100, [735, 500, 55, 85, 10, 0], ['#979a22', '#c9a53a', '#dfdc60', '#a5a730', '#c8c64a'], 9, 11);
scatter(60, [925, 420, 60, 90, 5, 10], ['#979a22', '#f0ee80', '#cf9f34', '#dfdc60'], 9, 9);
scatter(45, [785, 487, 125, 18, 0, 8], ['#979a22', '#f0ee80', '#c9b63c', '#a5a730'], 9, 7);
scatter(60, [30, 85, 105, 60, 0, 30], ['#979a22', '#d8d65a', '#a5a730', '#e0de68'], 7, 7);
scatter(24, [275, 105, 40, 28, 5, 8], ['#979a22', '#a5a730'], 4, 5);
scatter(170, [350, 35, 170, 110, 30, 20], ['#b9ba3c', '#b3b435', '#c8c848', '#d0cf50'], 9, 1.500);
scatter(60, [350, 95, 140, 55, 10, 40], ['#b3b435', '#a5a730'], 7, 2);
scatter(28, [222, 195, 8, 40, 10, 0], ['#979a22'], 8, 3);
scatter(22, [338, 198, 40, 8, 0, 14], ['#979a22', '#e0de68'], 4, 5);
scatter(30, [515, 175, 8, 75, 30, 0], ['#979a22', '#d8d65a'], 6, 3);
scatter(90, [830, 605, 165, 22, 0, 50], ['#c2c04a', '#b3b435', '#c8c84c', '#e0de68'], 6, 5);
```
